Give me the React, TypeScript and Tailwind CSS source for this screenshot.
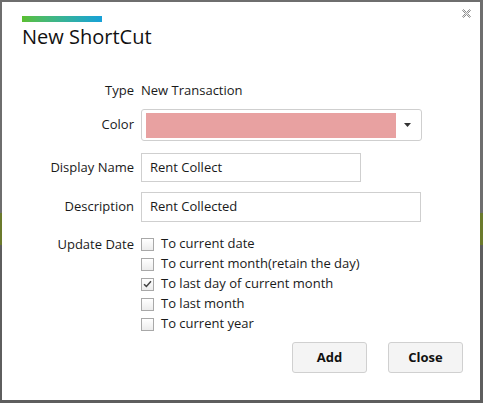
const font = { fontFamily: '"Open Sans", "Noto Sans", sans-serif' };

function CheckRow({ label, checked }: { label: string; checked?: boolean }) {
  return (
    <label className="flex items-center h-[20px] gap-[7px]">
      <span className="w-[13px] h-[13px] border border-[#a8a8a8] bg-gradient-to-b from-white to-[#ececec] flex items-center justify-center">
        {checked && (
          <svg width="9" height="8" viewBox="0 0 9 8">
            <path d="M1 4.2 L3.4 6.4 L8 1.2" fill="none" stroke="#444" strokeWidth="1.5" />
          </svg>
        )}
      </span>
      <span>{label}</span>
    </label>
  );
}

function Row({ label, children, className = '' }: { label: string; children: React.ReactNode; className?: string }) {
  return (
    <div className={`flex items-center ${className}`}>
      <div className="w-[113px] text-right pr-[1px]">{label}</div>
      <div className="ml-[6px] flex-1">{children}</div>
    </div>
  );
}

export default function App() {
  return (
    <div
      className="w-[483px] h-[403px] pt-[2px] pl-[2px] pr-[3px] pb-[3px] bg-[linear-gradient(to_bottom,#6e6e6e_0,#6e6e6e_213px,#6b7a2c_213px,#6b7a2c_245px,#5e5e5e_245px)]"
      style={font}
    >
      <div className="relative w-full h-full bg-white text-[13px] text-[#1a1a1a] pt-[14px] px-[20px]">
        <button className="absolute right-[9px] top-[7px]">
          <svg width="9" height="9" viewBox="0 0 9 9">
            <path
              d="M0.5 1.5 L1.5 0.5 L4.5 3.5 L7.5 0.5 L8.5 1.5 L5.5 4.5 L8.5 7.5 L7.5 8.5 L4.5 5.5 L1.5 8.5 L0.5 7.5 L3.5 4.5 Z"
              fill="#ececec"
              stroke="#8e8e8e"
              strokeWidth="1"
            />
          </svg>
        </button>

        <div className="w-[80px] h-[6px] bg-gradient-to-r from-[#5abf2c] to-[#17a0d8]" />
        <h1 className="text-[20px] leading-[28px] text-[#111] mt-[1px]">New ShortCut</h1>

        <div className="mt-[30px]">
          <Row label="Type" className="h-[20px]">
            New Transaction
          </Row>

          <Row label="Color" className="mt-[8px]">
            <div className="w-[281px] h-[32px] border border-[#cfcfcf] rounded-[3px] flex items-center pl-[4px] pr-[10px]">
              <div className="w-[250px] h-[25px] bg-[#e8a1a1]" />
              <svg className="ml-auto" width="7" height="4" viewBox="0 0 7 4">
                <path d="M0 0 H7 L3.5 4 Z" fill="#333" />
              </svg>
            </div>
          </Row>

          <Row label="Display Name" className="mt-[12px]">
            <div className="w-[220px] h-[29px] border border-[#cfcfcf] flex items-center px-[8px]">Rent Collect</div>
          </Row>

          <Row label="Description" className="mt-[10px]">
            <div className="w-[280px] h-[30px] border border-[#cfcfcf] flex items-center px-[8px]">Rent Collected</div>
          </Row>

          <div className="flex mt-[12px]">
            <div className="w-[113px] text-right pr-[1px] leading-[20px]">Update Date</div>
            <div className="ml-[6px] flex flex-col">
              <CheckRow label="To current date" />
              <CheckRow label="To current month(retain the day)" />
              <CheckRow label="To last day of current month" checked />
              <CheckRow label="To last month" />
              <CheckRow label="To current year" />
            </div>
          </div>
        </div>

        <div className="flex justify-end gap-[21px] mt-[8px]">
          <button className="w-[75px] h-[31px] rounded-[3px] border border-[#d0d0d0] bg-[#f4f4f4] font-bold text-[#111]">
            Add
          </button>
          <button className="w-[75px] h-[31px] rounded-[3px] border border-[#d0d0d0] bg-[#f4f4f4] font-bold text-[#111] mr-[-3px]">
            Close
          </button>
        </div>
      </div>
    </div>
  );
}
